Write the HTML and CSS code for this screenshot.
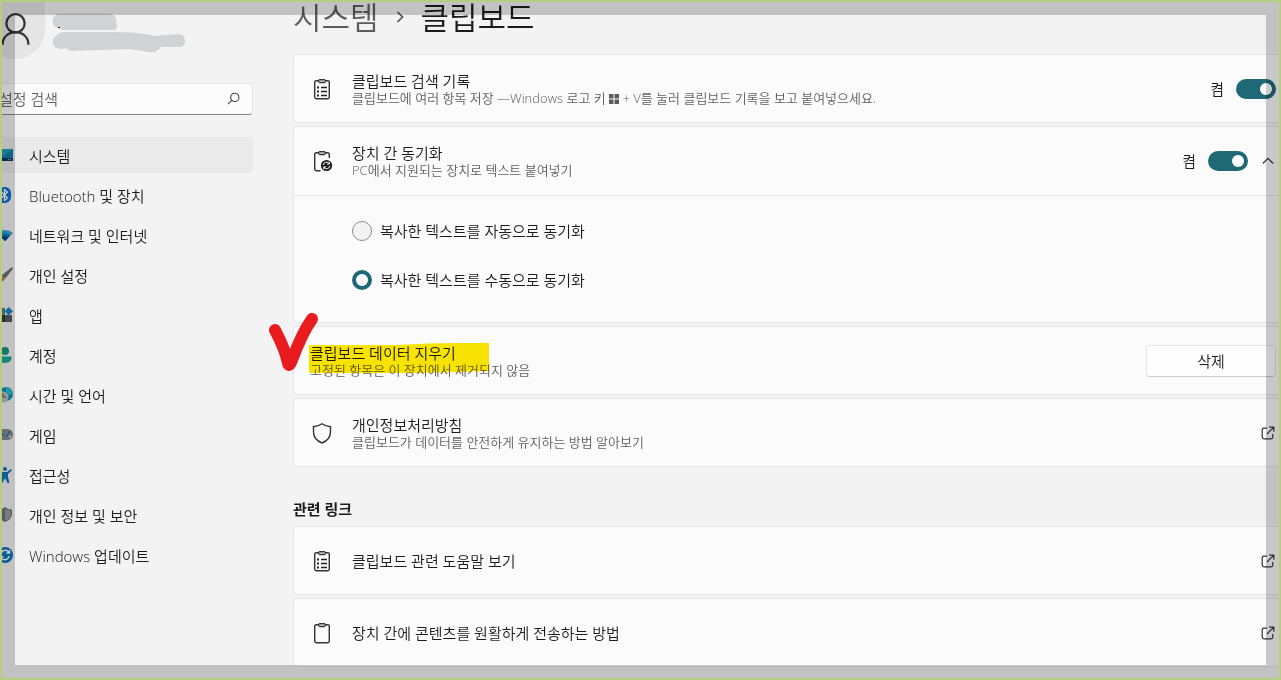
FILE: index.html
```
<!DOCTYPE html>
<html lang="ko">

	<head>
		<meta charset="UTF-8">
		<title>클립보드 - 설정</title>
		<meta name="viewport" content="width=device-width,initial-scale=1">
		<link rel="stylesheet" href="styles.css">
	</head>

	<body>
		<!-- shared icons -->
		<svg class="defs" width="0" height="0" aria-hidden="true">
			<symbol id="i-board" viewBox="0 0 24 24">
				<rect x="4.7" y="3.7" width="14.6" height="18" rx="1.6" fill="none" stroke="#333" stroke-width="1.4"/>
				<rect x="8.5" y="2.6" width="7" height="3" rx="1.5" fill="#bbb" stroke="#333" stroke-width="1.1"/>
			</symbol>
			<symbol id="i-list" viewBox="0 0 24 24">
				<use href="#i-board"/>
				<path d="M7 10.5h2M7 14.5h2M7 18.5h2" stroke="#222" stroke-width="2"/>
				<path d="M11 10.5h6M11 14.5h6M11 18.5h6" stroke="#222" stroke-width="1.3"/>
			</symbol>
			<symbol id="i-open" viewBox="0 0 14 14">
				<path d="M6 2.2H3A1.8 1.8 0 0 0 1.2 4v7A1.8 1.8 0 0 0 3 12.8h7a1.8 1.8 0 0 0 1.8-1.8V8M8.3 1.2h4.5v4.5M12.6 1.4L6 8" fill="none" stroke="#333" stroke-width="1.2"/>
			</symbol>
		</svg>

		<div class="container">
			<aside class="sidebar">
				<div class="profile">
					<div class="avatar">
						<svg viewBox="0 0 60 60">
							<circle cx="31" cy="23" r="9" fill="none" stroke="#333" stroke-width="2.2"/>
							<path d="M18.4 44v-1a12.6 11.5 0 0 1 25.2 0v1" fill="none" stroke="#333" stroke-width="2.2"/>
						</svg>
					</div>
					<svg class="scribble" width="136" height="42" viewBox="0 0 136 42">
						<path d="M9 9h49" stroke="#d1d2d4" stroke-width="15" stroke-linecap="round"/>
						<path d="M12 14h50" stroke="#d1d2d4" stroke-width="8" stroke-linecap="round"/>
						<path d="M7 15.500h2" stroke="#222"/>
						<path d="M5 24Q8 20 14 20L60 20Q90 20 103 24L128 22Q134 23 134 29Q134 35 128 35L110 35Q106 41 98 40L78 37L20 39Q16 38 15 36Q10 38 6 36Q2 34 2 30Q2 26 5 24Z" fill="#d1d2d4"/>
					</svg>
				</div>

				<div class="search">
					<input type="text" placeholder="설정 검색" aria-label="설정 검색">
					<svg width="14" height="14" viewBox="0 0 14 14"><circle cx="8.8" cy="5.4" r="4.1" fill="none" stroke="#444" stroke-width="1.1"/><path d="M5.8 8.4L2 12.2" stroke="#444" stroke-width="1.1"/></svg>
				</div>

				<nav class="nav">
					<a class="active" href="#">
						<svg viewBox="0 0 16 16"><path d="M0 2h16v9H0z" fill="#1f9fb5"/><path d="M16 2v9H3z" fill="#147fae"/><path d="M0 11h16v3H0z" fill="#0d3a5c"/><path d="M11 12.5h1M13 12.5h1" stroke="#7cc"/></svg>
						시스템
					</a>
					<a href="#">
						<svg viewBox="0 0 16 16"><rect x="1" width="13" height="16" rx="6" fill="#0a6fd6"/><path d="M4.5 5l6 6L7.5 13.5V2.5L10.5 5l-6 6" fill="none" stroke="#fff" stroke-width="1.2"/></svg>
						Bluetooth 및 장치
					</a>
					<a href="#">
						<svg viewBox="0 0 16 16"><path d="M0 6Q8 0 16 6L8 14z" fill="#35a5d4"/><path d="M2.5 8.5Q8 4 13.5 8.5L8 14z" fill="#1479bd"/><path d="M4.5 10.5Q8 7.5 11.5 10.5L8 14z" fill="#0a4a85"/></svg>
						네트워크 및 인터넷
					</a>
					<a href="#">
						<svg viewBox="0 0 16 16"><path d="M15 0L4.5 8.5l3.500 3.500L16 1.500z" fill="#6d7278"/><path d="M4.500 8.500L7.500 12Q6 16 1 15Q4 13 4.500 8.500z" fill="#d8682c"/></svg>
						개인 설정
					</a>
					<a href="#">
						<svg viewBox="0 0 16 16"><path d="M1 1h7v7H1z" fill="#73777b"/><path d="M1 8h7v7H1z" fill="#35393d"/><path d="M8 8h7v7H8z" fill="#555a60"/><path d="M11.7 0l4.3 4.2-4.3 4.3-4.2-4.3z" fill="#168bc9"/></svg>
						앱
					</a>
					<a href="#">
						<svg viewBox="0 0 16 16"><circle cx="8" cy="4" r="4" fill="#179782"/><path d="M1.5 9.5h13Q15 16 8 16T1.5 9.5z" fill="#1caa91"/></svg>
						계정
					</a>
					<a href="#">
						<svg viewBox="0 0 16 16"><circle cx="9" cy="7" r="7" fill="#1590ba"/><path d="M9 0a7 7 0 0 1 7 7l-4 1-3-3z" fill="#31bcd0"/><circle cx="6" cy="10" r="5.5" fill="#b9bdbf"/><path d="M6 6.5V10h3" fill="none" stroke="#555"/></svg>
						시간 및 언어
					</a>
					<a href="#">
						<svg viewBox="0 0 16 16"><rect y="2" width="16" height="11" rx="5.5" fill="#858b93"/><path d="M2 7.5h5M4.5 5v5" stroke="#444"/><circle cx="12" cy="5.5" r="1.1" fill="#1677b8"/><circle cx="10" cy="8.5" r="1.1" fill="#1677b8"/><circle cx="13" cy="9.5" r="1.1" fill="#e8eef2"/></svg>
						게임
					</a>
					<a href="#">
						<svg viewBox="0 0 16 16"><circle cx="8" cy="2" r="2" fill="#1176bd"/><path d="M2 3l4 2h4l4-3 .8 1.5L11 7v3l1.500 6h-2L8 11l-2.500 5h-2L5 10V7L1.500 4.500z" fill="#1176bd"/></svg>
						접근성
					</a>
					<a href="#">
						<svg viewBox="0 0 16 16"><path d="M8 0Q11 2.5 15 2.5V7Q15 12 8 15Q1 12 1 7V2.5Q5 2.5 8 0z" fill="#6d7176"/><path d="M8 1.5Q11 3.5 14 3.7V7Q14 11.5 8 14z" fill="#989c9f"/></svg>
						개인 정보 및 보안
					</a>
					<a href="#">
						<svg viewBox="0 0 16 16"><circle cx="8" cy="8" r="8" fill="#0d72bd"/><path d="M4 7a4.3 4.3 0 0 1 8-1.5M12.5 3v3h-3M12 9a4.3 4.3 0 0 1-8 1.5M3.500 13v-3h3" fill="none" stroke="#fff" stroke-width="1.4"/></svg>
						Windows 업데이트
					</a>
				</nav>
			</aside>

			<main class="main">
				<h1 class="crumb">
					<a href="#">시스템</a>
					<svg width="10" height="14" viewBox="0 0 10 14"><path d="M2.5 2l5 5-5 5" fill="none" stroke="#555" stroke-width="1.7"/></svg>
					<span>클립보드</span>
				</h1>

				<div class="list">
					<div class="card row">
						<svg class="icon"><use href="#i-list"/></svg>
						<div class="text">
							<label class="title" for="history">클립보드 검색 기록</label>
							<p>클립보드에 여러 항목 저장 —Windows 로고 키 <svg class="win" width="10" height="10" viewBox="0 0 10 10"><path d="M0 0h4.500v4.500H0zM5.500 0H10v4.500H5.500zM0 5.500h4.500V10H0zM5.500 5.500H10V10H5.500z" fill="#5c5c5c"/></svg> + V를 눌러 클립보드 기록을 보고 붙여넣으세요.</p>
						</div>
						<span class="state">켬</span>
						<input class="toggle" type="checkbox" role="switch" id="history" checked>
					</div>

					<div class="card">
						<div class="row">
							<svg class="icon" viewBox="0 0 24 24">
								<path d="M10.5 21.7H6.3a1.6 1.6 0 0 1-1.6-1.6V5.3a1.6 1.6 0 0 1 1.6-1.6h11.4a1.6 1.6 0 0 1 1.6 1.6V9" fill="none" stroke="#333" stroke-width="1.4"/>
								<rect x="8.5" y="2.6" width="7" height="3" rx="1.5" fill="#bbb" stroke="#333" stroke-width="1.1"/>
								<circle cx="16.5" cy="16.5" r="5.6" fill="#1c1c1c"/>
								<path d="M13.2 16a3.3 3.3 0 0 1 5.8-1.6M19.3 12.8v2.3H17M19.8 17a3.3 3.3 0 0 1-5.8 1.6M13.7 20.2v-2.3H16" fill="none" stroke="#fff"/>
							</svg>
							<div class="text">
								<label class="title" for="sync">장치 간 동기화</label>
								<p>PC에서 지원되는 장치로 텍스트 붙여넣기</p>
							</div>
							<span class="state">켬</span>
							<input class="toggle" type="checkbox" role="switch" id="sync" checked>
							<button class="fold" type="button" aria-label="접기">
								<svg width="14" height="14" viewBox="0 0 14 14"><path d="M1.8 9.5L7 4.3l5.2 5.2" fill="none" stroke="#333" stroke-width="1.2"/></svg>
							</button>
						</div>
						<div class="options">
							<label><input type="radio" name="mode">복사한 텍스트를 자동으로 동기화</label>
							<label><input type="radio" name="mode" checked>복사한 텍스트를 수동으로 동기화</label>
						</div>
					</div>

					<div class="card row clear">
						<div class="text">
							<div class="title">클립보드 데이터 지우기</div>
							<p>고정된 항목은 이 장치에서 제거되지 않음</p>
						</div>
						<button class="btn" type="button">삭제</button>
						<svg class="marker" width="182" height="34" viewBox="0 0 182 34"><path d="M1 3L90 3Q120 1 150 1H181V29L150 30L100 31H1z" fill="#fce700"/></svg>
						<svg class="check" width="54" height="64" viewBox="0 0 54 64"><path d="M8 19Q18 38 21 52Q22 57 25 49Q35 22 45 8" fill="none" stroke="#e81c1e" stroke-width="12" stroke-linecap="round" stroke-linejoin="round"/></svg>
					</div>

					<a class="card row" href="#">
						<svg class="icon" viewBox="0 0 24 24"><path d="M12 2.7Q16 5.5 20.500 5.700V11Q20.500 18.500 12 22Q3.500 18.500 3.500 11V5.700Q8 5.500 12 2.700z" fill="none" stroke="#333" stroke-width="1.4"/></svg>
						<div class="text">
							<div class="title">개인정보처리방침</div>
							<p>클립보드가 데이터를 안전하게 유지하는 방법 알아보기</p>
						</div>
						<svg class="open"><use href="#i-open"/></svg>
					</a>
				</div>

				<h2>관련 링크</h2>

				<div class="list">
					<a class="card row" href="#">
						<svg class="icon"><use href="#i-list"/></svg>
						<div class="text title">클립보드 관련 도움말 보기</div>
						<svg class="open"><use href="#i-open"/></svg>
					</a>
					<a class="card row" href="#">
						<svg class="icon"><use href="#i-board"/></svg>
						<div class="text title">장치 간에 콘텐츠를 원활하게 전송하는 방법</div>
						<svg class="open"><use href="#i-open"/></svg>
					</a>
				</div>
			</main>
		</div>

		<div class="frame"></div>
	</body>

</html>
```
FILE: styles.css
```
*{
	padding: 0;
	margin: 0;
	box-sizing: border-box;
}
body{
	font-family: "Open Sans", "Noto Sans CJK KR", sans-serif;
	font-size: 15px;
	font-weight: 350;
	line-height: 18px;
	color: #1b1b1b;
	background: #f3f3f3;
	overflow: hidden;
}
a{
	color: inherit;
	text-decoration: none;
}
input,button{
	font: inherit;
	color: inherit;
}
svg{
	flex: none;
}
.defs{
	position: absolute;
}
.container{
	display: flex;
	height: 100vh;
	overflow: hidden;
}

/* 사이드바 */
.sidebar{
	flex: none;
	width: 269px;
	margin-left: -16px;
}
.profile{
	display: flex;
	align-items: flex-start;
	gap: 6px;
	height: 83px;
}
.avatar{
	width: 61px;
	height: 59px;
	background: #e5e5e5;
	border-radius: 0 0 30px 30px;
}
.scribble{
	margin-top: 12px;
}
.search{
	display: flex;
	align-items: center;
	height: 32px;
	padding: 0 12px 0 14px;
	background: #fcfcfc;
	border: 1px solid #e3e3e3;
	border-bottom-color: #868686;
	border-radius: 4px;
	margin-bottom: 22px;
}
.search input{
	flex: 1;
	min-width: 0;
	border: none;
	outline: none;
	background: none;
}
.search input::placeholder{
	color: #606060;
	opacity: 1;
}
.nav{
	display: flex;
	flex-direction: column;
	gap: 4px;
}
.nav a{
	display: flex;
	align-items: center;
	gap: 16px;
	height: 36px;
	padding: 2px 0 0 13px;
	border-radius: 4px;
}
.nav a.active{
	background: #eaeaea;
}
.nav svg{
	width: 16px;
	height: 16px;
	margin-bottom: 2px;
}

/* 본문 */
.main{
	flex: 1;
	min-width: 0;
	padding-left: 40px;
}
.crumb{
	display: flex;
	align-items: center;
	gap: 16px;
	margin-bottom: 20px;
	font-size: 31px;
	font-weight: 350;
	line-height: 34px;
}
.crumb a{
	color: #5c5c5c;
}
h2{
	margin: 32px 0 7px;
	font-size: 15px;
	font-weight: bold;
	line-height: 20px;
}
.list{
	display: flex;
	flex-direction: column;
	gap: 3px;
}
.card{
	position: relative;
	background: #fbfbfb;
	border: 1px solid #e5e5e5;
	border-right: none;
	border-radius: 4px 0 0 4px;
}
.row{
	display: flex;
	align-items: center;
	min-height: 69px;
	padding: 0 5px 0 16px;
}
.card .row{
	min-height: 68px;
}
.icon{
	width: 24px;
	height: 24px;
	margin-right: 18px;
}
.text{
	flex: 1;
	min-width: 0;
}
label.title{
	display: block;
}
.text p{
	font-size: 13px;
	line-height: 16px;
	color: #5f5f5f;
}
.win{
	vertical-align: -1px;
}
.state{
	margin-right: 12px;
}
.toggle{
	appearance: none;
	flex: none;
	width: 40px;
	height: 20px;
	padding: 4px;
	border-radius: 10px;
	background: #8a8a8a;
}
.toggle::before{
	content: "";
	display: block;
	width: 12px;
	height: 12px;
	border-radius: 50%;
	background: #fff;
}
.toggle:checked{
	background: #1f6977;
}
.toggle:checked::before{
	margin-left: auto;
}
.fold{
	display: flex;
	margin: 0 1px 0 13px;
	border: none;
	background: none;
}
.open{
	width: 14px;
	height: 14px;
	margin-right: 1px;
}
.options{
	display: flex;
	flex-direction: column;
	gap: 29px;
	padding: 25px 58px 32px;
	border-top: 1px solid #e5e5e5;
}
.options label{
	display: flex;
	align-items: center;
	gap: 8px;
	height: 20px;
}
.options input{
	appearance: none;
	width: 20px;
	height: 20px;
	border: 1px solid #8b8b8b;
	border-radius: 50%;
	background: #f3f3f3;
}
.options input:checked{
	border: 4px solid #1f6977;
	background: #fff;
}
.btn{
	width: 130px;
	height: 32px;
	border: 1px solid #e5e5e5;
	border-bottom-color: #ccc;
	border-radius: 4px;
	background: #fefefe;
}

/* 손으로 그린 표시 */
.marker{
	position: absolute;
	left: 14px;
	top: 15px;
	mix-blend-mode: multiply;
}
.check{
	position: absolute;
	left: -27px;
	top: -16px;
}

/* 화면 테두리 */
.frame{
	position: fixed;
	inset: 0;
	border: 2px solid #b4ce82;
	box-shadow: inset 0 0 0 13px rgba(0,0,0,0.2);
	pointer-events: none;
}
```
